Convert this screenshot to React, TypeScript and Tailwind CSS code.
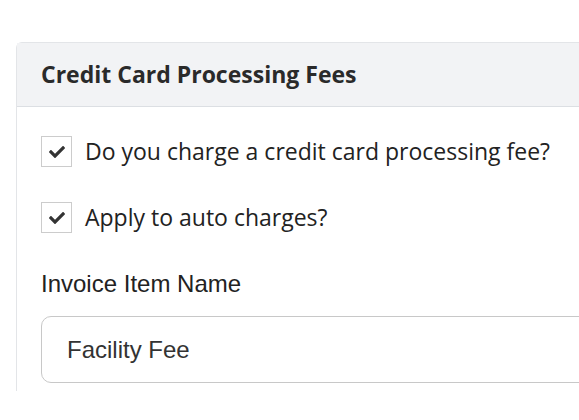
function CheckRow({ label }: { label: string }) {
  return (
    <label className="flex items-center gap-[13px]">
      <span className="flex h-[31px] w-[31px] shrink-0 items-center justify-center border border-[#cccccc] bg-white">
        <svg viewBox="0 0 512 512" className="h-[16px] w-[16px] fill-[#333333]">
          <path d="M173.9 439.4 7.5 273c-10-10-10-26.2 0-36.2l36.2-36.2c10-10 26.2-10 36.2 0L192 312.7 432.1 72.6c10-10 26.2-10 36.2 0l36.2 36.2c10 10 10 26.2 0 36.2L210.1 439.4c-10 10-26.2 10-36.2 0z" />
        </svg>
      </span>
      <span
        className="whitespace-nowrap text-[23px] leading-[31px] text-[#222222]"
        style={{ fontFamily: '"Open Sans", sans-serif' }}
      >
        {label}
      </span>
    </label>
  );
}

export default function App() {
  return (
    <div className="h-[420px] w-full overflow-hidden bg-white pt-[42px] pl-[16px]">
      <div className="w-[620px] rounded-tl-[6px] border-l border-t border-[#e3e5e8]">
        <div className="flex h-[64px] items-center border-b border-[#dcdfe3] bg-[#f2f3f5] px-[24px]">
          <h2
            className="text-[23px] font-bold leading-none text-[#2a2a2a]"
            style={{ fontFamily: '"Open Sans", sans-serif' }}
          >
            Credit Card Processing Fees
          </h2>
        </div>
        <div className="flex flex-col pl-[24px] pt-[29px] pb-[8px]">
          <CheckRow label="Do you charge a credit card processing fee?" />
          <div className="h-[35px]" />
          <CheckRow label="Apply to auto charges?" />
          <div
            className="mt-[37px] text-[24px] leading-[28px] text-[#222222]"
            style={{ fontFamily: '"Liberation Sans", Arial, sans-serif' }}
          >
            Invoice Item Name
          </div>
          <div
            className="mt-[18px] flex h-[67px] items-center rounded-[10px] border border-[#c8c8c8] px-[25px] text-[24px] text-[#333333]"
            style={{ fontFamily: '"Liberation Sans", Arial, sans-serif' }}
          >
            Facility Fee
          </div>
        </div>
      </div>
    </div>
  );
}
